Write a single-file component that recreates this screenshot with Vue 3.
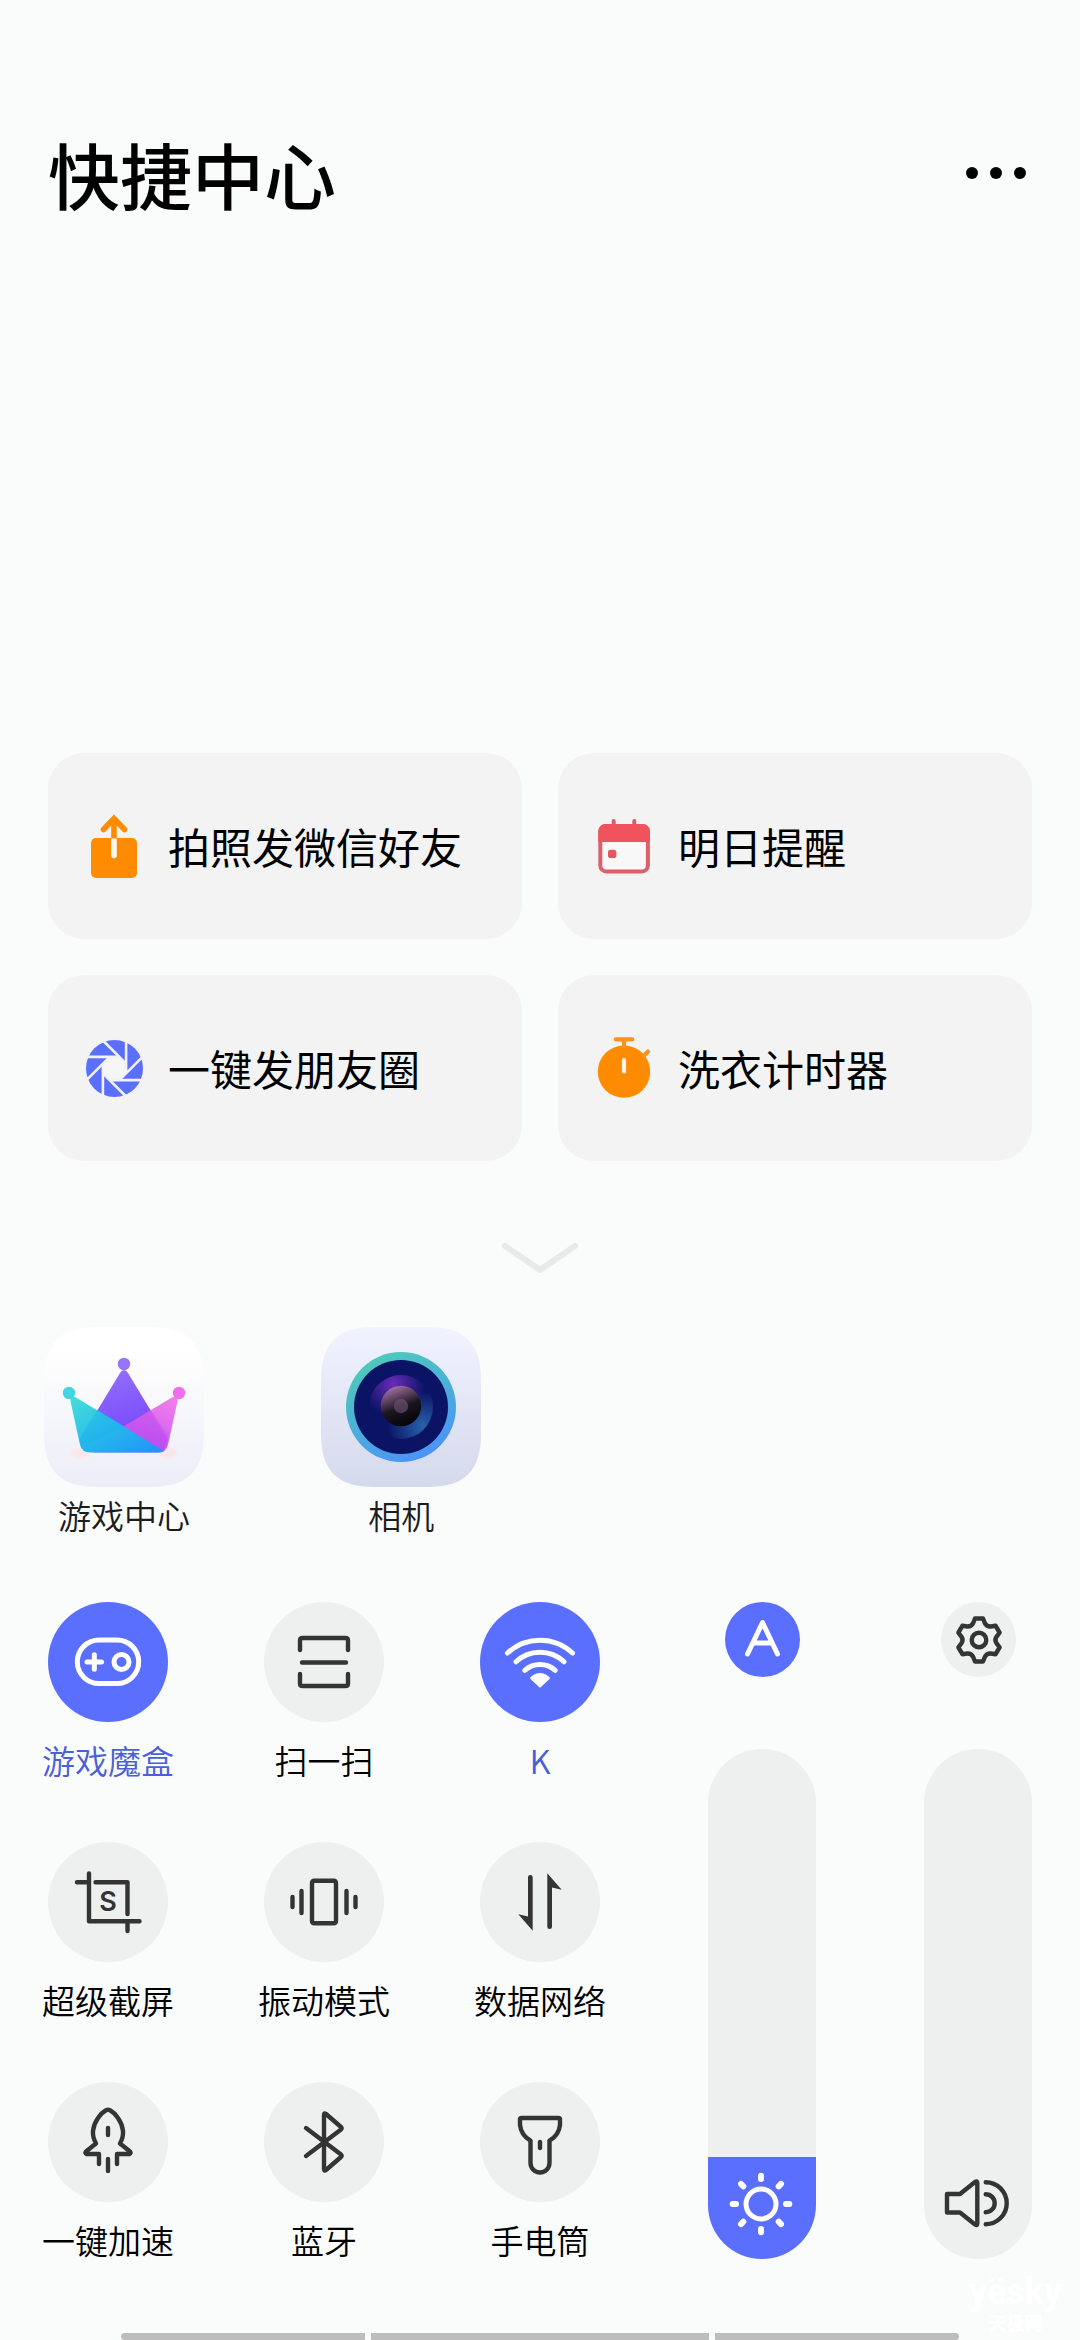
<script setup>
import { ref, reactive } from 'vue'

const shortcuts = [
  { id: 'share', label: '拍照发微信好友' },
  { id: 'calendar', label: '明日提醒' },
  { id: 'aperture', label: '一键发朋友圈' },
  { id: 'timer', label: '洗衣计时器' }
]

const tiles = reactive([
  { id: 'game', label: '游戏魔盒', on: true },
  { id: 'scan', label: '扫一扫', on: false },
  { id: 'wifi', label: 'K', on: true },
  { id: 'shot', label: '超级截屏', on: false },
  { id: 'vibrate', label: '振动模式', on: false },
  { id: 'data', label: '数据网络', on: false },
  { id: 'boost', label: '一键加速', on: false },
  { id: 'bluetooth', label: '蓝牙', on: false },
  { id: 'torch', label: '手电筒', on: false }
])

const autoBrightness = ref(true)
const brightness = ref(20)
const volume = ref(0)

const eighths = [0, 45, 90, 135, 180, 225, 270, 315]

// Outline of the six-toothed gear, one tooth per 60 degrees around the origin.
function gearOutline() {
  const turn = (x, y, deg) => {
    const a = (deg * Math.PI) / 180
    const px = x * Math.cos(a) - y * Math.sin(a)
    const py = x * Math.sin(a) + y * Math.cos(a)
    return px.toFixed(2) + ' ' + py.toFixed(2)
  }
  let d = 'M' + turn(-4, -21.5, 0)
  for (let i = 0; i < 6; i++) {
    const t = i * 60
    d += 'L' + turn(4, -21.5, t) + 'L' + turn(5.8, -17, t)
    d += 'Q' + turn(7.6, -13.2, t) + ' ' + turn(-5.8, -17, t + 60)
    d += 'L' + turn(-4, -21.5, t + 60)
  }
  return d + 'Z'
}
const gear = gearOutline()
</script>

<template>
  <main class="page">
    <header class="header">
      <h1 class="title">快捷中心</h1>
      <button class="more" type="button" aria-label="更多">
        <svg width="64" height="24" viewBox="0 0 64 24">
          <circle cx="8" cy="12" r="6" /><circle cx="32" cy="12" r="6" /><circle cx="56" cy="12" r="6" />
        </svg>
      </button>
    </header>

    <section class="cards">
      <button v-for="s in shortcuts" :key="s.id" class="card" type="button">
        <svg class="card-icon" viewBox="0 0 72 72" aria-hidden="true">
          <g v-if="s.id === 'share'">
            <rect x="13" y="28" width="46" height="40" rx="5" fill="#ff8c00" />
            <path d="M36 30V9M25.5 19.5L36 8.5L46.5 19.5" fill="none" stroke="#ff8c00" stroke-width="5.6" stroke-linecap="round" />
            <path d="M33.2 28.5h5.6v17a2.8 2.8 0 0 1-5.6 0z" fill="#fbf7f0" />
          </g>
          <g v-else-if="s.id === 'calendar'">
            <path d="M25.7 11v6M46.3 11v6" stroke="#dc5c67" stroke-width="4" stroke-linecap="round" />
            <rect x="12.3" y="16" width="47.6" height="45.4" rx="6" fill="#f8f8f8" stroke="#dc5f69" stroke-width="4" />
            <path d="M10.3 32V21a7 7 0 0 1 7-7h37.6a7 7 0 0 1 7 7V32z" fill="#f0525e" />
            <rect x="20" y="39.7" width="8.4" height="8.4" rx="2.6" fill="#e8545f" />
          </g>
          <g v-else-if="s.id === 'aperture'" transform="translate(36.5 36.5)">
            <circle r="28.5" fill="#5b6fff" />
            <path d="M-4.8-11.5H4.8L11.5-4.8V4.8L4.8 11.5H-4.8L-11.5 4.8V-4.8z" fill="#f6f6f7" />
            <path v-for="a in eighths" :key="a" d="M-28-11.6H4.8" :transform="`rotate(${a})`" stroke="#f3f3f6" stroke-width="2.6" />
          </g>
          <g v-else>
            <circle cx="36" cy="39.6" r="26.2" fill="#ff8c00" />
            <path d="M27.7 7.3H44.3M36 7v8M60 19.5L55 24.5" stroke="#fb931c" stroke-width="4.2" stroke-linecap="round" />
            <path d="M36 28v11.5" stroke="#fff6e8" stroke-width="4.2" stroke-linecap="round" />
          </g>
        </svg>
        <span>{{ s.label }}</span>
      </button>
    </section>

    <button class="expand" type="button" aria-label="展开">
      <svg width="84" height="36" viewBox="0 0 84 36">
        <path d="M7 6L42 30L77 6" fill="none" stroke="#e8e9e9" stroke-width="6" stroke-linecap="round" stroke-linejoin="round" />
      </svg>
    </button>

    <section class="apps">
      <a class="app" href="#games">
        <svg width="160" height="160" viewBox="0 0 160 160" aria-hidden="true">
          <defs>
            <linearGradient id="g-bg" x1="0" y1="0" x2="0" y2="1"><stop offset=".15" stop-color="#fff" /><stop offset="1" stop-color="#ecedf7" /></linearGradient>
            <linearGradient id="g-top" x1="0" y1="0" x2="0.3" y2="1"><stop offset="0" stop-color="#9673f8" /><stop offset="1" stop-color="#7544ff" /></linearGradient>
            <linearGradient id="g-left" x1="0" y1="0" x2="1" y2="1"><stop offset="0" stop-color="#3fdcd8" /><stop offset=".5" stop-color="#21bdea" /><stop offset="1" stop-color="#1b90ff" /></linearGradient>
            <linearGradient id="g-right" x1="1" y1="0" x2=".6" y2="1"><stop offset="0" stop-color="#f470e6" /><stop offset="1" stop-color="#c14df5" /></linearGradient>
            <radialGradient id="g-glow"><stop offset=".5" stop-color="#fbe6ea" /><stop offset="1" stop-color="#fbe6ea" stop-opacity="0" /></radialGradient>
          </defs>
          <path d="M0 54C0 16 16 0 54 0H106C144 0 160 16 160 54V106C160 144 144 160 106 160H54C16 160 0 144 0 106z" fill="url(#g-bg)" />
          <ellipse cx="37" cy="126" rx="12" ry="7" fill="url(#g-glow)" />
          <ellipse cx="124" cy="126" rx="12" ry="7" fill="url(#g-glow)" />
          <circle cx="80" cy="37" r="6.2" fill="#9673f8" />
          <circle cx="25" cy="66" r="6.2" fill="#41d6e2" />
          <circle cx="135" cy="66" r="6.2" fill="#ee70e8" />
          <path d="M76 46Q80 40 84 46L124.500 113L120 124H40L35.500 113z" fill="url(#g-top)" />
          <path d="M128 70.500Q134 67.500 133.500 74L124 118Q122 125.500 114 125.500H50L42 122z" fill="url(#g-right)" fill-opacity=".9" />
          <path d="M36 108L54 82L80 99L42 124z" fill="#4a86ff" fill-opacity=".4" />
          <path d="M32 70.500Q26 67.500 26.500 74L36 118Q38 125.500 46 125.500H114Q118 125.500 120 124z" fill="url(#g-left)" fill-opacity=".96" />
          <path d="M54 82L35.500 112L37 120L80 99z" fill="#1aa9ef" fill-opacity=".25" />
          <path d="M106 82L124.500 108L120 124L80 99z" fill="#b44be8" fill-opacity=".28" />
        </svg>
        <span>游戏中心</span>
      </a>
      <a class="app" href="#camera">
        <svg width="160" height="160" viewBox="0 0 160 160" aria-hidden="true">
          <defs>
            <linearGradient id="c-bg" x1="0" y1="0" x2="0" y2="1"><stop offset="0" stop-color="#f1f3ff" /><stop offset="1" stop-color="#d4d9ec" /></linearGradient>
            <linearGradient id="c-ring" x1=".25" y1="0" x2=".75" y2="1"><stop offset="0" stop-color="#4dcdb8" /><stop offset="1" stop-color="#4b90fb" /></linearGradient>
            <radialGradient id="c-violet" cx=".38" cy=".14" r=".5"><stop offset="0" stop-color="#6a2bb8" /><stop offset="1" stop-color="#6a2bb8" stop-opacity="0" /></radialGradient>
            <radialGradient id="c-blue" cx=".84" cy=".8" r=".55"><stop offset="0" stop-color="#2a62aa" /><stop offset="1" stop-color="#2a62aa" stop-opacity="0" /></radialGradient>
            <linearGradient id="c-lens" x1=".25" y1="0" x2=".65" y2="1"><stop offset="0" stop-color="#ad78ae" /><stop offset=".55" stop-color="#1b151f" /><stop offset="1" stop-color="#020406" /></linearGradient>
          </defs>
          <path d="M0 54C0 16 16 0 54 0H106C144 0 160 16 160 54V106C160 144 144 160 106 160H54C16 160 0 144 0 106z" fill="url(#c-bg)" />
          <circle cx="80" cy="80" r="55" fill="url(#c-ring)" />
          <circle cx="80" cy="80" r="47" fill="#0b1464" />
          <circle cx="80" cy="80" r="32" fill="url(#c-violet)" />
          <circle cx="80" cy="80" r="32" fill="url(#c-blue)" />
          <circle cx="80" cy="79" r="20.200" fill="url(#c-lens)" />
          <circle cx="80" cy="79" r="7.200" fill="#6b5470" fill-opacity=".65" />
        </svg>
        <span>相机</span>
      </a>
    </section>

    <section class="controls">
      <div class="tiles">
        <button v-for="t in tiles" :key="t.id" class="tile" :class="{ on: t.on }" type="button" :aria-pressed="t.on" @click="t.on = !t.on">
          <svg class="disc" viewBox="0 0 120 120" aria-hidden="true">
            <g v-if="t.id === 'game'" class="bold">
              <rect x="29.300" y="38" width="61.400" height="43.600" rx="21.800" />
              <path d="M39 60H53.500M46.300 52.700V67.300" />
              <circle cx="73.500" cy="60" r="7.500" />
            </g>
            <path v-else-if="t.id === 'scan'" d="M36 48V38.500Q36 36 38.500 36H81.500Q84 36 84 38.500V48M38 60.500H82M36 72V81.500Q36 84 38.500 84H81.500Q84 84 84 81.500V72" />
            <g v-else-if="t.id === 'wifi'" class="bold">
              <path d="M27.500 51A47.500 47.500 0 0 1 92.500 51M36 59.800A34.800 34.800 0 0 1 84 59.800M44.800 68.300A23 23 0 0 1 75.200 68.300" />
              <path class="solid" d="M50.500 75.200Q60 67 69.500 75.200Q70.500 76 69.500 77L60.700 85.300Q60 86 59.300 85.300L50.500 77Q49.500 76 50.500 75.200z" />
            </g>
            <g v-else-if="t.id === 'shot'">
              <path d="M41 31.500V79.300H91.500M29 40.300H40M47.500 40.300H79.500V72M79.500 80V89" />
              <text x="60" y="69" text-anchor="middle">S</text>
            </g>
            <path v-else-if="t.id === 'vibrate'" d="M50.500 38.700H69.500Q72 38.700 72 41.200V78.800Q72 81.300 69.500 81.300H50.500Q48 81.300 48 78.800V41.200Q48 38.700 50.500 38.700zM37.500 49V71M28.500 55V65M82.500 49V71M91.500 55V65" />
            <g v-else-if="t.id === 'data'">
              <path class="solid" d="M48 35.300a2.350 2.350 0 0 1 4.700 0V88.700L38.300 72.300L48 74.500z" />
              <path class="solid" d="M48 35.300a2.350 2.350 0 0 1 4.700 0V88.700L38.300 72.300L48 74.500z" transform="rotate(180 60 60)" />
            </g>
            <path v-else-if="t.id === 'boost'" d="M51 82V72H38.500Q36.500 71 38 69.500L48 61.500Q44.500 55 45 49C46 39 53 31 58 28.300Q60 27.300 62 28.300C67 31 74 39 75 49Q75.500 55 72 61.500L82 69.500Q83.500 71 81.500 72H69V82M60 46V53M60 77V89" />
            <path v-else-if="t.id === 'bluetooth'" d="M42 46L77 72.500Q78.300 73.700 77 75L62 88Q60 89.500 60 87V33Q60 30.500 62 32L77 45Q78.300 46.300 77 47.500L42 74" />
            <path v-else d="M41.500 36H78.500Q80 36 80 37.500V43Q79 53 69.500 58.700V81A9.500 9.500 0 0 1 50.500 81V58.700Q41 53 40 43V37.500Q40 36 41.500 36zM60 60V66" />
          </svg>
          <span>{{ t.label }}</span>
        </button>
      </div>

      <div class="levels">
        <div class="level">
          <button class="round" :class="{ on: autoBrightness }" type="button" aria-label="自动亮度" :aria-pressed="autoBrightness" @click="autoBrightness = !autoBrightness">
            <svg width="75" height="75" viewBox="0 0 75 75"><path d="M22.500 52L37.500 20.500L52.500 52M28.500 41H46.500" /></svg>
          </button>
          <div class="slider">
            <input v-model="brightness" type="range" min="0" max="100" aria-label="亮度" :style="{ '--level': brightness + '%' }">
            <svg class="on" width="80" height="80" viewBox="0 0 80 80" aria-hidden="true">
              <circle cx="39" cy="40" r="15" />
              <path v-for="a in eighths" :key="a" class="ray" d="M39 11.700V15" :transform="`rotate(${a} 39 40)`" />
            </svg>
          </div>
        </div>
        <div class="level">
          <button class="round" type="button" aria-label="设置">
            <svg width="75" height="75" viewBox="0 0 75 75">
              <g transform="translate(38 38)"><path :d="gear" /><circle r="7.300" /></g>
            </svg>
          </button>
          <div class="slider">
            <input v-model="volume" type="range" min="0" max="100" aria-label="音量" :style="{ '--level': volume + '%' }">
            <svg width="80" height="80" viewBox="0 0 80 80" aria-hidden="true">
              <path d="M9 30H22L37 18Q39.300 16.500 39.300 19V59.500Q39.300 62 37 60.500L22 48.500H9zM47.700 18.200a21 21 0 0 1 0 42M47.700 30.200a9 9 0 0 1 0 18" />
            </svg>
          </div>
        </div>
      </div>
    </section>

    <footer class="nav"><i></i><i class="wide"></i><i></i></footer>
    <div class="mark"><b>yësky</b><span>天极网</span></div>
  </main>
</template>

<style>
body {
  margin: 0;
  background: #fafbfb;
}
</style>

<style scoped>
.page {
  position: relative;
  box-sizing: border-box;
  min-height: 100vh;
  display: flex;
  flex-direction: column;
  padding-top: 120px;
  background: #fafbfb;
  color: #000;
  font-family: "Noto Sans CJK SC", sans-serif;
}
button {
  border: 0;
  padding: 0;
  background: none;
  color: inherit;
  font: inherit;
  cursor: pointer;
}
svg {
  display: block;
}
.header {
  display: flex;
  justify-content: space-between;
  align-items: center;
  padding: 0 48px;
}
.title {
  margin: 0;
  font-size: 72px;
  line-height: 106px;
  font-weight: 500;
}
.more {
  margin-right: 4px;
}
.cards {
  margin-top: auto;
  padding: 0 48px;
  display: grid;
  grid-template-columns: 1fr 1fr;
  gap: 36px;
}
.card {
  display: flex;
  align-items: center;
  gap: 18px;
  height: 186px;
  padding: 0 30px;
  border-radius: 36px;
  background: #f3f3f3;
  font-size: 42px;
  line-height: 60px;
}
.card-icon {
  width: 72px;
  height: 72px;
}
.expand {
  align-self: center;
  margin: 79px 0 51px;
}
.apps {
  display: grid;
  grid-template-columns: repeat(4, 160px);
  justify-content: space-between;
  padding: 0 44px;
}
.app {
  display: flex;
  flex-direction: column;
  align-items: center;
  gap: 4px;
  color: #1c1c1c;
  text-decoration: none;
  font-size: 33px;
  line-height: 48px;
  font-weight: 350;
}
.controls {
  display: flex;
  justify-content: space-between;
  align-items: flex-start;
  padding: 0 48px;
  margin: 63px 0 69px;
}
.tiles {
  flex: 0 1 552px;
  display: grid;
  grid-template-columns: repeat(3, 120px);
  justify-content: space-between;
  row-gap: 58px;
}
.tile {
  display: flex;
  flex-direction: column;
  align-items: center;
  gap: 14px;
  font-size: 33px;
  line-height: 48px;
  font-weight: 350;
  white-space: nowrap;
}
.tile.on {
  color: #4a60d8;
}
.disc {
  width: 120px;
  height: 120px;
  border-radius: 50%;
  background: #eeefef;
}
.disc,
.round svg,
.slider svg {
  fill: none;
  stroke: #333433;
  stroke-width: 4.4;
  stroke-linecap: round;
  stroke-linejoin: round;
}
.on .disc,
.round.on svg,
.slider svg.on {
  stroke: #fff;
}
.on .disc {
  background: #5b6fff;
}
.disc .bold {
  stroke-width: 5;
}
.disc .solid {
  fill: #333433;
  stroke: none;
}
.on .disc .solid {
  fill: #fff;
}
.disc text {
  fill: #333433;
  stroke: none;
  font: 600 27px Inter, sans-serif;
}
.levels {
  flex: 0 1 324px;
  display: flex;
  justify-content: space-between;
}
.level {
  display: flex;
  flex-direction: column;
  align-items: center;
  gap: 72px;
}
.round {
  border-radius: 50%;
  background: #eeefef;
}
.round.on {
  background: #5b6fff;
}
.round.on svg,
.slider svg.on {
  stroke-width: 5;
}
.slider {
  position: relative;
}
.slider input {
  display: block;
  width: 108px;
  height: 510px;
  margin: 0;
  border-radius: 54px;
  appearance: none;
  writing-mode: vertical-lr;
  direction: rtl;
  background: linear-gradient(to top, #5b6fff var(--level), #eeefef var(--level));
  cursor: pointer;
}
.slider input::-webkit-slider-thumb {
  appearance: none;
  width: 108px;
  height: 20px;
  background: transparent;
}
.slider svg {
  position: absolute;
  left: 14px;
  bottom: 15px;
  pointer-events: none;
}
.slider svg .ray {
  stroke-width: 6;
}
.nav {
  display: flex;
  justify-content: center;
  gap: 6px;
  height: 7px;
}
.nav i {
  width: 244px;
  background: #bdbdbd;
}
.nav .wide {
  width: 338px;
}
.nav i:first-child {
  border-radius: 4px 0 0 4px;
}
.nav i:last-child {
  border-radius: 0 4px 4px 0;
}
.mark {
  position: absolute;
  right: 18px;
  bottom: 6px;
  display: flex;
  flex-direction: column;
  align-items: center;
  color: #fff;
  font-family: Roboto, "Noto Sans CJK SC", sans-serif;
}
.mark b {
  font-size: 36px;
  line-height: 42px;
  font-weight: 700;
}
.mark span {
  font-size: 18px;
  line-height: 21px;
  font-weight: 900;
}
</style>
